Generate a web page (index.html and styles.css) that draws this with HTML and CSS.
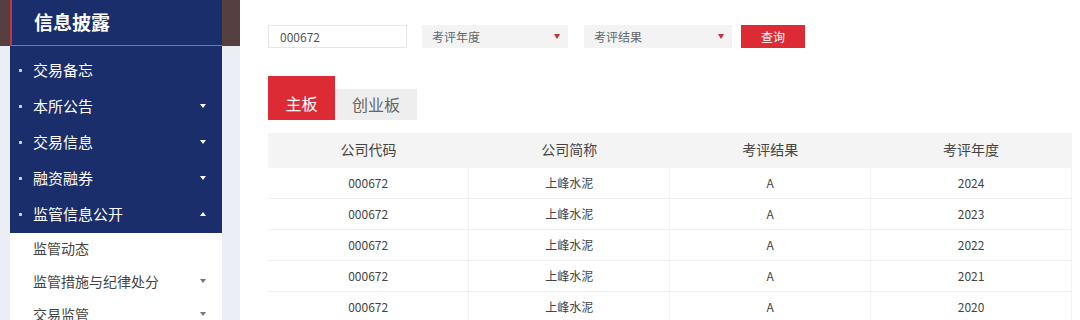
FILE: index.html
```html
<!DOCTYPE html>
<html lang="zh-CN">
<head>
    <meta charset="UTF-8">
    <title>信息披露</title>
    <link rel="stylesheet" href="styles.css">
</head>
<body>
    <div class="page">
        <!-- Left menu -->
        <aside class="side">
            <div class="side-head">
                <h2>信息披露</h2>
            </div>
            <div class="side-body">
                <ul class="nav">
                    <li><span class="dot"></span>交易备忘</li>
                    <li><span class="dot"></span>本所公告<span class="arrow"></span></li>
                    <li><span class="dot"></span>交易信息<span class="arrow"></span></li>
                    <li><span class="dot"></span>融资融券<span class="arrow"></span></li>
                    <li><span class="dot"></span>监管信息公开<span class="arrow up"></span></li>
                </ul>
                <ul class="sub">
                    <li>监管动态</li>
                    <li>监管措施与纪律处分<span class="arrow"></span></li>
                    <li>交易监管<span class="arrow"></span></li>
                </ul>
            </div>
        </aside>

        <main class="main">
            <!-- Search bar -->
            <div class="search">
                <input type="text" class="code-input" value="000672">
                <div class="select sel-year">考评年度<span class="tri"></span></div>
                <div class="select sel-result">考评结果<span class="tri"></span></div>
                <button class="query">查询</button>
            </div>

            <!-- Board tabs -->
            <div class="tabs">
                <div class="tab active">主板</div>
                <div class="tab">创业板</div>
            </div>

            <table class="grid">
                <thead>
                    <tr>
                        <th>公司代码</th>
                        <th>公司简称</th>
                        <th>考评结果</th>
                        <th>考评年度</th>
                    </tr>
                </thead>
                <tbody>
                    <tr><td>000672</td><td>上峰水泥</td><td>A</td><td>2024</td></tr>
                    <tr><td>000672</td><td>上峰水泥</td><td>A</td><td>2023</td></tr>
                    <tr><td>000672</td><td>上峰水泥</td><td>A</td><td>2022</td></tr>
                    <tr><td>000672</td><td>上峰水泥</td><td>A</td><td>2021</td></tr>
                    <tr><td>000672</td><td>上峰水泥</td><td>A</td><td>2020</td></tr>
                </tbody>
            </table>
        </main>
    </div>
</body>
</html>
```

FILE: styles.css
```css
/* Page base */
html, body {
    margin: 0;
    padding: 0;
    background: #ffffff;
    font-family: "Noto Sans CJK SC", "Noto Sans", sans-serif;
    color: #333;
}

ul {
    list-style: none;
    margin: 0;
    padding: 0;
}

.page {
    display: flex;
    height: 320px;
    overflow: hidden;
}

/* Sidebar */
.side {
    width: 240px;
    flex-shrink: 0;
    background-color: #eceef5;
}

.side-head {
    background-color: #56403f;
    padding: 0 18px 0 10px;
}

.side-head h2 {
    margin: 0;
    height: 45px;
    line-height: 43px;
    background-color: #1a2e6b;
    border-left: 2px solid #c3343c;
    border-bottom: 1px solid #6c7ca9;
    color: #fff;
    font-size: 19px;
    font-weight: 700;
    padding-left: 22px;
}

.side-body {
    padding: 0 18px 0 10px;
}

.nav {
    background-color: #1a2e6b;
    padding-top: 7px;
}

.nav li,
.sub li {
    box-sizing: border-box;
    display: flex;
    align-items: center;
    position: relative;
    padding-left: 23px;
}

.nav li {
    height: 36px;
    padding-bottom: 3px;
    color: #fff;
    font-size: 15px;
}

.dot {
    position: absolute;
    left: 9px;
    top: 50%;
    width: 3px;
    height: 3px;
    margin-top: -2px;
    border-radius: 1px;
    background-color: #d8dcea;
}

.arrow {
    margin-left: auto;
    margin-right: 16px;
    width: 0;
    height: 0;
    border-left: 3.5px solid transparent;
    border-right: 3.5px solid transparent;
    border-top: 4px solid #fff;
}

.arrow.up {
    border-top: none;
    border-bottom: 4px solid #fff;
}

.sub {
    background-color: #fff;
}

.sub li {
    height: 33px;
    padding-bottom: 3px;
    color: #444;
    font-size: 14px;
}

.sub .arrow {
    border-top-color: #777;
}

/* Main area */
.main {
    flex: 1;
    padding: 25px 8px 0 28px;
}

.search {
    display: flex;
    align-items: center;
    height: 23px;
}

.code-input {
    box-sizing: border-box;
    width: 139px;
    height: 23px;
    border: 1px solid #e6e6e6;
    padding: 0 11px;
    font-family: inherit;
    font-size: 12px;
    color: #555;
    outline: none;
}

.select {
    box-sizing: border-box;
    display: flex;
    align-items: center;
    height: 23px;
    background-color: #f3f3f3;
    padding: 0 8px 0 10px;
    font-size: 12px;
    color: #666;
}

.sel-year {
    width: 146px;
    margin-left: 15px;
}

.sel-result {
    width: 148px;
    margin-left: 16px;
}

.tri {
    margin-left: auto;
    width: 0;
    height: 0;
    border-left: 3.5px solid transparent;
    border-right: 3.5px solid transparent;
    border-top: 5px solid #d02c36;
}

.query {
    width: 64px;
    height: 23px;
    margin-left: 9px;
    border: none;
    background-color: #dd2b35;
    color: #fff;
    font-family: inherit;
    font-size: 12px;
    padding: 0;
}

/* Tabs */
.tabs {
    display: flex;
    align-items: flex-end;
    margin-top: 28px;
}

.tab {
    box-sizing: border-box;
    display: flex;
    align-items: center;
    justify-content: center;
    height: 31px;
    width: 82px;
    padding-bottom: 2px;
    background-color: #eeeeee;
    color: #666;
    font-size: 16px;
}

.tab.active {
    height: 44px;
    width: 67px;
    background-color: #dd2b35;
    color: #fff;
    padding-top: 11px;
}

/* Table */
.grid {
    width: 804px;
    margin-top: 13px;
    border-collapse: collapse;
    table-layout: fixed;
}

.grid th {
    height: 32px;
    background-color: #f4f4f4;
    font-weight: normal;
    font-size: 14px;
    color: #444;
    padding: 0 0 3px;
}

.grid td {
    height: 28px;
    text-align: center;
    font-size: 12px;
    color: #444;
    padding: 0 0 2px;
    border-bottom: 1px solid #f0f0f0;
    border-left: 1px solid #f3f3f3;
}

.grid td:first-child {
    border-left: none;
}

.grid td:last-child {
    border-right: 1px solid #f3f3f3;
}
```
